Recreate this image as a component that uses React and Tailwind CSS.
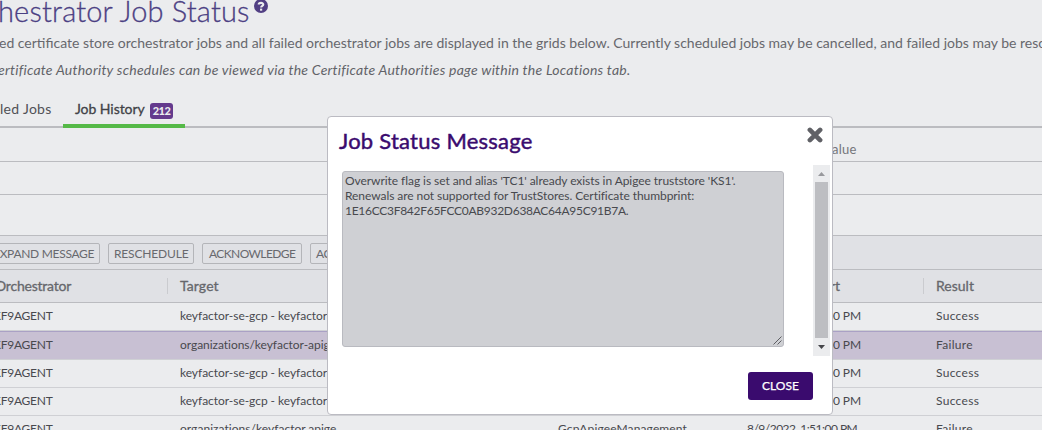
import React from 'react';

const rows = [
  { target: 'keyfactor-se-gcp - keyfactor', time: '00 PM', result: 'Success' },
  { target: 'organizations/keyfactor-apige', time: '00 PM', result: 'Failure', selected: true },
  { target: 'keyfactor-se-gcp - keyfactor', time: '00 PM', result: 'Success' },
  { target: 'keyfactor-se-gcp - keyfactor', time: '00 PM', result: 'Success' },
  { target: 'organizations/keyfactor.apige', type: 'GcpApigeeManagement', time: '8/9/2022, 1:51:00 PM', result: 'Failure' },
];

const gridCols = 'grid grid-cols-[180px_378px_189px_189px_106px]';

function ToolButton({ children, className }) {
  return (
    <button className={`h-[21px] shrink-0 overflow-hidden rounded-[2px] border border-[#b4b5b9] text-left text-[12px] leading-[17px] whitespace-nowrap text-[#68696e] ${className}`}>
      {children}
    </button>
  );
}

function Row({ row }) {
  return (
    <div className={`${gridCols} box-border h-7 border-b border-[#cfd0d4] text-[12px] leading-[26px] whitespace-nowrap text-[#48494e] ${row.selected ? 'bg-[#c8c0d3]' : ''}`}>
      <div className="-ml-[7px] tracking-[-0.25px]">KF9AGENT</div>
      <div className={row.type ? 'tracking-[0.04px]' : 'tracking-[-0.04px]'}>{row.target}</div>
      <div className="tracking-[0.13px]">{row.type}</div>
      <div className={row.type ? 'tracking-[-0.52px]' : 'pr-[75px] text-right tracking-[-0.1px]'}>{row.time}</div>
      <div className="tracking-[0.3px]">{row.result}</div>
    </div>
  );
}

function Modal() {
  return (
    <div className="absolute top-[116px] left-[327px] flex h-[299px] w-[506px] flex-col rounded-[4px] border border-[#bbbbc2] bg-white">
      <div className="flex h-12 shrink-0 justify-between pr-[9px] pl-[11px]">
        <h2 className="pt-[8px] text-[22px] leading-[32px] tracking-[0.24px] text-[#3a0b6e] [-webkit-text-stroke:0.45px_#3a0b6e]">Job Status Message</h2>
        <svg className="mt-[10px] h-4 w-4" viewBox="0 0 16 16">
          <path d="M2.9 2.9 L13.1 13.1 M13.1 2.9 L2.9 13.1" stroke="#606166" strokeWidth="4.7" strokeLinecap="round" />
        </svg>
      </div>
      <div className="flex h-[191px] shrink-0 justify-between pr-[2px] pl-[14px]">
        <div className="mt-[6px] flex h-[176px] w-[442px] flex-col justify-between rounded-[3px] border border-[#b9bac0] bg-[#cfd0d4] pt-px pl-[2px] text-[12px] leading-[15px] whitespace-nowrap text-[#48494e]">
          <div>
            <p className="tracking-[-0.06px]">Overwrite flag is set and alias 'TC1' already exists in Apigee truststore 'KS1'.</p>
            <p className="tracking-[-0.06px]">Renewals are not supported for TrustStores. Certificate thumbprint:</p>
            <p className="tracking-[-0.28px]">1E16CC3F842F65FCC0AB932D638AC64A95C91B7A.</p>
          </div>
          <svg className="mr-px mb-px h-[9px] w-[9px] self-end" viewBox="0 0 9 9">
            <path d="M0.5 8.5 L8.5 0.5 M4.5 8.5 L8.5 4.5" stroke="#505156" strokeWidth="0.9" />
          </svg>
        </div>
        <div className="flex w-[17px] flex-col items-center bg-[#ebecee]">
          <svg className="h-[17px] w-[17px]" viewBox="0 0 17 17">
            <path d="M5 11 L8.5 7 L12 11 Z" fill="#98999d" />
          </svg>
          <div className="w-[13px] flex-1 bg-[#bdbec2]" />
          <svg className="h-[18px] w-[17px]" viewBox="0 0 17 18">
            <path d="M5 7 L12 7 L8.5 11 Z" fill="#45464a" />
          </svg>
        </div>
      </div>
      <div className="flex justify-end pt-4 pr-[19px]">
        <button className="h-7 w-[65px] rounded-[3px] bg-[#3a0b6e] text-[12px] leading-7 text-white [-webkit-text-stroke:0.25px_white]">CLOSE</button>
      </div>
    </div>
  );
}

export default function App() {
  return (
    <div className="relative h-[430px] w-[1042px] overflow-hidden bg-[#ebecee] font-['Lato','Liberation_Sans',sans-serif]">
      <div className="flex h-[30px] items-start">
        <h1 className="-mt-[7px] -ml-[2px] w-[256px] shrink-0 text-[29px] leading-[36px] font-light tracking-[0.17px] whitespace-nowrap text-[#4b4083] [-webkit-text-stroke:0.3px_#4b4083]">hestrator Job Status</h1>
        <svg className="-mt-px h-[14px] w-[14px]" viewBox="0 0 14 14">
          <circle cx="7" cy="7" r="7" fill="#513f83" />
          <path d="M4.7 5.5 C4.8 3.4 9.3 3.2 9.3 5.6 C9.3 7 7.1 6.8 7.1 8.6" fill="none" stroke="#ebecee" strokeWidth="2.1" />
          <rect x="6" y="9.6" width="2.2" height="2.1" fill="#ebecee" />
        </svg>
      </div>
      <p className="-ml-px h-[27px] text-[14px] leading-[25px] whitespace-nowrap text-[#67686d]">ed certificate store orchestrator jobs and all failed orchestrator jobs are displayed in the grids below. Currently scheduled jobs may be cancelled, and failed jobs may be rescheduled.</p>
      <p className="-ml-[2px] h-[39px] text-[14px] leading-[25px] tracking-[0.25px] whitespace-nowrap text-[#626368] italic">ertificate Authority schedules can be viewed via the Certificate Authorities page within the Locations tab.</p>
      <div className="flex h-8 border-b-2 border-[#bbbcc0] text-[14px] leading-[26px] whitespace-nowrap">
        <div className="w-[63px] tracking-[0.3px] text-[#505156]">led Jobs</div>
        <div className="flex h-8 w-[122px] border-b-4 border-[#55b947] pl-[12px]">
          <span className="w-[75px] tracking-[-0.05px] text-[#414247] [-webkit-text-stroke:0.3px_#414247]">Job History</span>
          <span className="mt-[7px] h-4 w-[23px] rounded-[3px] bg-[#643a8d] text-center text-[11px] leading-4 font-black tracking-[-0.6px] text-[#ebecee]">212</span>
        </div>
      </div>
      <div className="h-[34px] border-b border-[#bbbcc0] pt-[12px] pl-[824px] text-[13px] leading-[19px] tracking-[0.2px] text-[#75767b]">Value</div>
      <div className="h-[33px] border-b border-[#bbbcc0]" />
      <div className="h-[41px] border-b border-[#bbbcc0]" />
      <div className="flex h-[34px] border-b border-[#bbbcc0] bg-[#e0e1e5] pt-[7px]">
        <ToolButton className="mr-2 -ml-[10px] w-[110px] pl-[2px] tracking-[-0.3px]">EXPAND MESSAGE</ToolButton>
        <ToolButton className="mr-2 w-[86px] pl-[5px] tracking-[-0.17px]">RESCHEDULE</ToolButton>
        <ToolButton className="mr-2 w-[100px] pl-[6px] tracking-[-0.6px]">ACKNOWLEDGE</ToolButton>
        <ToolButton className="w-[120px] pl-[5px] tracking-[-0.5px]">AC</ToolButton>
      </div>
      <div className={`${gridCols} h-[33px] border-b border-[#bbbcc0] bg-[#e0e1e5] text-[14px] leading-[32px] text-[#66676c] [-webkit-text-stroke:0.3px_#66676c]`}>
        <div className="flex justify-between pr-[12px]">
          <span className="-ml-[5px] tracking-[-0.22px]">Orchestrator</span>
          <span className="mt-2 h-4 w-px bg-[#cacbcf]" />
        </div>
        <div className="tracking-[0.1px]">Target</div>
        <div />
        <div className="flex justify-between pr-[12px] pl-[83px]">
          <span>rt</span>
          <span className="mt-2 h-4 w-px bg-[#cacbcf]" />
        </div>
        <div>Result</div>
      </div>
      <Row row={rows[0]} />
      <div className="border-t border-[#aaa1c5]">
        {rows.slice(1).map((row, i) => (
          <Row key={i} row={row} />
        ))}
      </div>
      <Modal />
    </div>
  );
}
